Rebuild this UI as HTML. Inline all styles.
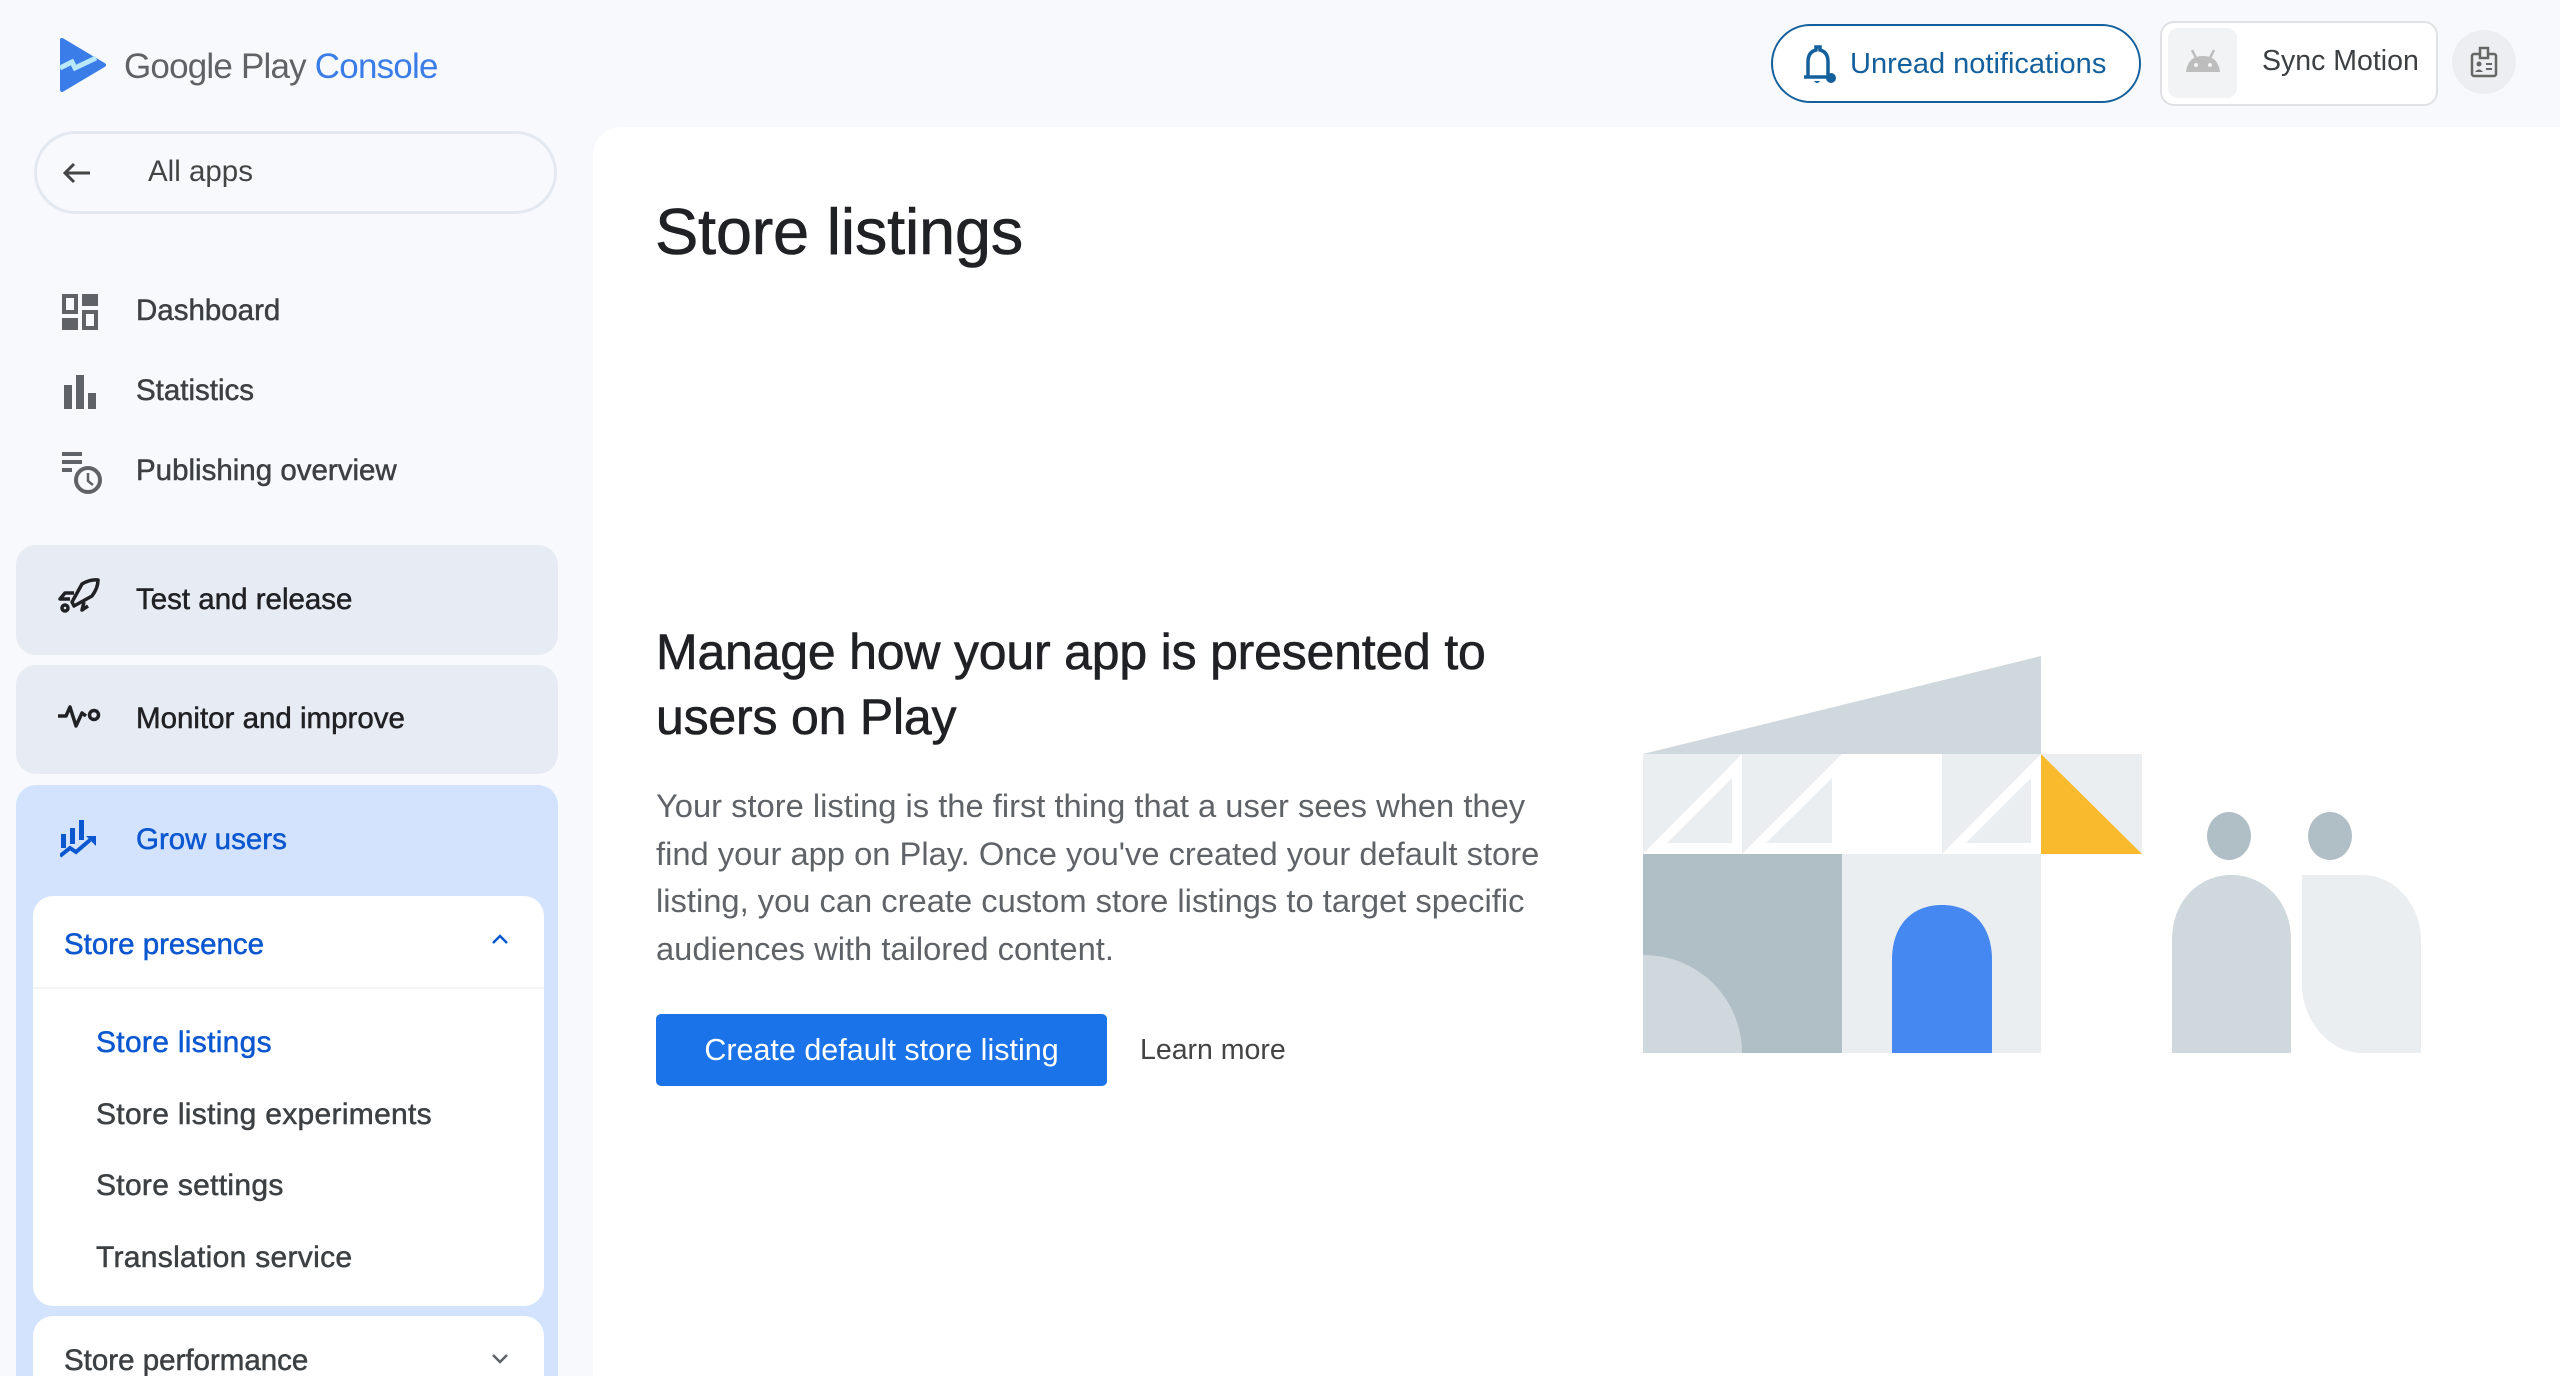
<!DOCTYPE html>
<html style="width:2560px;height:1376px;overflow:hidden"><head><meta charset="utf-8"><style>
*{margin:0;padding:0;box-sizing:border-box}
body{width:2560px;height:1376px;background:#f7f9fd;font-family:"Liberation Sans",sans-serif;position:relative;overflow:hidden;color:#3c4043}
.a{position:absolute;white-space:nowrap}
.nav{font-size:29.5px;color:#3c4043;line-height:40px;-webkit-text-stroke:0.5px currentColor}
.sub{font-size:30px;letter-spacing:0.3px}
.box{position:absolute;left:16px;width:542px;border-radius:20px}
</style></head><body>
<!-- logo -->
<svg class="a" style="left:58px;top:38px" width="50" height="54" viewBox="0 0 50 54"><path d="M4 2 L46 27 L4 52 Z" fill="#3a7de8" stroke="#3a7de8" stroke-width="4" stroke-linejoin="round"/><path d="M2 30 L14 24 L17 30 L38 20" fill="none" stroke="#b9e8fb" stroke-width="5"/></svg>
<div class="a" style="left:124px;top:45px;font-size:35px;line-height:44px;color:#5f6368;letter-spacing:-0.8px">Google Play <span style="color:#3a7de8">Console</span></div>
<!-- all apps -->
<div class="a" style="left:34px;top:131px;width:523px;height:83px;border:3px solid #e4e9f1;border-radius:42px"></div>
<svg class="a" style="left:60px;top:158px" width="34" height="30" viewBox="0 0 34 30"><path d="M30 15 H5 M14 6 L5 15 L14 24" fill="none" stroke="#444" stroke-width="3"/></svg>
<div class="a nav" style="left:148px;top:152px;color:#444;-webkit-text-stroke:0">All apps</div>
<!-- nav icons -->
<svg class="a" style="left:62px;top:294px" width="36" height="36" viewBox="0 0 36 36" fill="#5f6368"><path d="M0 0h16v20H0zM4 4v12h8V4zM20 0h16v12H20zM0 24h16v12H0zM20 16h16v20H20zM24 20v12h8V20z" fill-rule="evenodd"/></svg>
<div class="a nav" style="left:136px;top:291px">Dashboard</div>
<svg class="a" style="left:63px;top:375px" width="34" height="34" viewBox="0 0 34 34" fill="#5f6368"><rect x="1" y="10" width="8" height="24"/><rect x="13" y="0" width="8" height="34"/><rect x="25" y="18" width="8" height="16"/></svg>
<div class="a nav" style="left:136px;top:371px">Statistics</div>
<svg class="a" style="left:62px;top:452px" width="44" height="44" viewBox="0 0 44 44"><g fill="#5f6368"><rect x="0" y="0" width="20" height="4"/><rect x="0" y="8" width="20" height="4"/><rect x="0" y="16" width="10" height="4"/></g><circle cx="26" cy="28" r="12" fill="none" stroke="#5f6368" stroke-width="4"/><path d="M26 21v8l5 4" fill="none" stroke="#5f6368" stroke-width="2.5"/></svg>
<div class="a nav" style="left:136px;top:451px">Publishing overview</div>
<!-- test and release -->
<div class="box" style="top:545px;height:110px;background:#e7ebf3"></div>
<svg class="a" style="left:58px;top:578px" width="42" height="36" viewBox="0 0 42 36"><g fill="none" stroke="#202124" stroke-width="3.5" stroke-linejoin="round"><path d="M14 24 L24 6 Q32 1 40 2 Q40 10 34 18 L16 28 Z"/><path d="M16 15 L7 15 L2 21 L12 21"/><path d="M26 24 L24 32 L30 28"/><circle cx="7" cy="30" r="3"/></g></svg>
<div class="a nav" style="left:136px;top:580px;color:#202124">Test and release</div>
<!-- monitor -->
<div class="box" style="top:665px;height:109px;background:#e7ebf3"></div>
<svg class="a" style="left:58px;top:704px" width="46" height="26" viewBox="0 0 46 26"><path d="M0 12 H8 L12 3 L18 22 L24 9 L28 12" fill="none" stroke="#202124" stroke-width="3.5" stroke-linejoin="round"/><circle cx="36" cy="11" r="4.5" fill="none" stroke="#202124" stroke-width="3.5"/></svg>
<div class="a nav" style="left:136px;top:699px;color:#202124">Monitor and improve</div>
<!-- grow users -->
<div class="box" style="top:785px;height:620px;background:#d3e3fd"></div>
<svg class="a" style="left:60px;top:820px" width="38" height="38" viewBox="0 0 38 38" fill="#0b57d0"><rect x="1" y="14" width="5" height="14"/><rect x="10" y="8" width="5" height="16"/><rect x="19" y="0" width="5" height="20"/><path d="M0 36 L10 28 L16 32 L30 20" fill="none" stroke="#0b57d0" stroke-width="4"/><path d="M26 16 H36 V26 Z"/></svg>
<div class="a nav" style="left:136px;top:820px;color:#0b57d0">Grow users</div>
<!-- store presence card -->
<div class="a" style="left:33px;top:896px;width:511px;height:410px;background:#fff;border-radius:20px"></div>
<div class="a" style="left:33px;top:987px;width:511px;height:2px;background:#f3f4f6"></div>
<div class="a nav" style="left:64px;top:925px;color:#0b57d0">Store presence</div>
<svg class="a" style="left:490px;top:932px" width="20" height="14" viewBox="0 0 20 14"><path d="M3 11 L10 4 L17 11" fill="none" stroke="#0b57d0" stroke-width="2.5"/></svg>
<div class="a nav sub" style="left:96px;top:1023px;color:#0b57d0">Store listings</div>
<div class="a nav sub" style="left:96px;top:1095px">Store listing experiments</div>
<div class="a nav sub" style="left:96px;top:1166px">Store settings</div>
<div class="a nav sub" style="left:96px;top:1238px">Translation service</div>
<div class="a" style="left:33px;top:1316px;width:511px;height:100px;background:#fff;border-radius:20px"></div>
<div class="a nav" style="left:64px;top:1341px">Store performance</div>
<svg class="a" style="left:490px;top:1352px" width="20" height="14" viewBox="0 0 20 14"><path d="M3 3 L10 10 L17 3" fill="none" stroke="#5f6368" stroke-width="2.5"/></svg>
<!-- top right -->
<div class="a" style="left:1771px;top:24px;width:370px;height:79px;border:2.5px solid #14609c;border-radius:40px;background:#fff"></div>
<svg class="a" style="left:1800px;top:44px" width="40" height="42" viewBox="0 0 40 42"><path d="M8 32 V18 Q8 8 16 6 V3 H20 V6 Q28 8 28 18 V32 M4 33 H30" fill="none" stroke="#14609c" stroke-width="3.5"/><circle cx="31" cy="34" r="5" fill="#14609c"/><path d="M14 37 Q17 41 20 37" fill="#14609c"/></svg>
<div class="a" style="left:1850px;top:46px;font-size:29px;line-height:36px;color:#14609c">Unread notifications</div>
<div class="a" style="left:2160px;top:21px;width:278px;height:85px;border:2px solid #dfe1e5;border-radius:14px;background:#fff"></div>
<div class="a" style="left:2168px;top:28px;width:69px;height:70px;background:#f1f3f4;border-radius:10px"></div>
<svg class="a" style="left:2182px;top:48px" width="42" height="28" viewBox="0 0 42 28"><path d="M4 24 Q6 8 21 8 Q36 8 38 24 Z" fill="#bdbdbd"/><path d="M10 2 L14 10 M32 2 L28 10" stroke="#bdbdbd" stroke-width="2.5"/><circle cx="14" cy="17" r="2" fill="#f1f3f4"/><circle cx="28" cy="17" r="2" fill="#f1f3f4"/></svg>
<div class="a" style="left:2262px;top:43px;font-size:28.5px;line-height:36px;color:#3c4043">Sync Motion</div>
<div class="a" style="left:2452px;top:30px;width:64px;height:64px;border-radius:50%;background:#eceef1"></div>
<svg class="a" style="left:2470px;top:46px" width="28" height="32" viewBox="0 0 28 32"><rect x="2" y="8" width="24" height="22" rx="2" fill="none" stroke="#666" stroke-width="2.5"/><rect x="10" y="2" width="8" height="10" fill="#eceef1" stroke="#666" stroke-width="2.5"/><circle cx="9" cy="18" r="2.5" fill="#666"/><path d="M5 26 Q9 21 13 26Z" fill="#666"/><path d="M16 18h6M16 23h6" stroke="#666" stroke-width="2"/></svg>
<!-- main panel -->
<div class="a" style="left:593px;top:127px;width:1967px;height:1249px;background:#fff;border-top-left-radius:28px"></div>
<div class="a" style="left:655px;top:190px;font-size:65px;line-height:84px;color:#202124;letter-spacing:-0.3px;-webkit-text-stroke:0.6px #202124">Store listings</div>
<div class="a" style="left:656px;top:620px;font-size:50px;line-height:65px;color:#202124;letter-spacing:-0.2px;-webkit-text-stroke:0.6px #202124">Manage how your app is presented to<br>users on Play</div>
<div class="a" style="left:656px;top:782px;font-size:32.7px;line-height:47.6px;color:#5f6368">Your store listing is the first thing that a user sees when they<br>find your app on Play. Once you've created your default store<br>listing, you can create custom store listings to target specific<br>audiences with tailored content.</div>
<div class="a" style="left:656px;top:1014px;width:451px;height:72px;background:#1a73e8;border-radius:5px;color:#fff;font-size:30.5px;line-height:72px;text-align:center">Create default store listing</div>
<div class="a" style="left:1140px;top:1032px;font-size:28.5px;line-height:36px;color:#444">Learn more</div>
<!-- illustration -->
<svg class="a" style="left:0;top:0" width="2560" height="1376" viewBox="0 0 2560 1376">
<polygon points="1643,754 2041,656 2041,754" fill="#cfd8dc"/>
<rect x="1643" y="754" width="99" height="100" fill="#eaeef1"/>
<rect x="1742" y="754" width="100" height="100" fill="#eaeef1"/>
<rect x="1942" y="754" width="99" height="100" fill="#eaeef1"/>
<rect x="2041" y="754" width="101" height="100" fill="#eaeef1"/>
<g fill="#fff">
<polygon points="1643,854 1742,754 1742,854"/><polygon points="1742,854 1842,754 1842,854"/><polygon points="1942,854 2041,754 2041,854"/>
</g>
<g fill="#eaeef1">
<polygon points="1667,843 1732,778 1732,843"/><polygon points="1766,843 1832,778 1832,843"/><polygon points="1966,843 2031,778 2031,843"/>
</g>
<polygon points="2041,754 2142,854 2041,854" fill="#f9bb2d"/>
<rect x="1643" y="854" width="199" height="199" fill="#b0bec5"/>
<path d="M1643,955 C1700,955 1742,1000 1742,1053 L1643,1053Z" fill="#cfd8dc"/>
<rect x="1842" y="854" width="199" height="199" fill="#eaeef1"/>
<path d="M1892,1053 V960 C1892,925 1912,905 1942,905 C1972,905 1992,925 1992,960 V1053 Z" fill="#4688f1"/>
<ellipse cx="2229" cy="836" rx="22" ry="24" fill="#b0bec5"/>
<ellipse cx="2330" cy="836" rx="22" ry="24" fill="#b0bec5"/>
<path d="M2172,1053 V940 C2172,900 2200,875 2231,875 C2263,875 2291,900 2291,940 V1053 Z" fill="#cfd8dc"/>
<path d="M2302,875 H2362 C2395,875 2421,905 2421,940 V1053 H2362 C2329,1053 2302,1020 2302,985 Z" fill="#eaeef1"/>
</svg>
</body></html>
